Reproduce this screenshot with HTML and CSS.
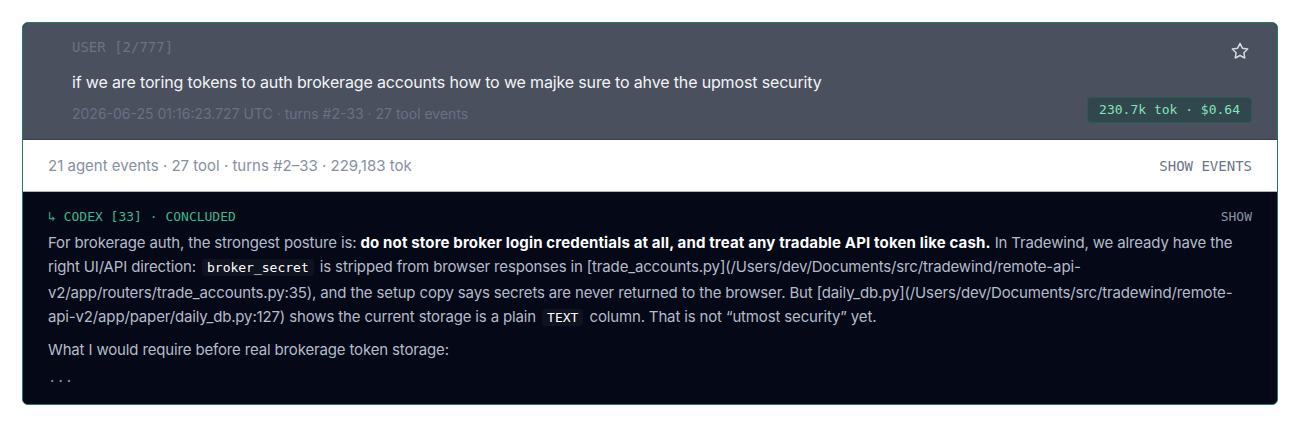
FILE: index.html
```html
<!DOCTYPE html>
<html lang="en">
<head>
<meta charset="utf-8">
<title>Turn</title>
<link rel="stylesheet" href="styles.css">
</head>
<body>
<div class="card">
  <div class="head">
    <div class="head-main">
      <div class="role">USER [2/777]</div>
      <div class="message">if we are toring tokens to auth brokerage accounts how to we majke sure to ahve the upmost security</div>
      <div class="meta">2026-06-25 01:16:23.727 UTC · turns #2-33 · 27 tool events</div>
    </div>
    <div class="head-side">
      <svg class="star" width="20" height="20" viewBox="0 0 24 24" fill="none" stroke="currentColor" stroke-width="1.8" stroke-linejoin="round"><path d="M12 2.8l2.85 5.78 6.38.93-4.62 4.5 1.09 6.35L12 17.36l-5.7 3 1.09-6.35-4.62-4.5 6.38-.93z"/></svg>
      <div class="badge">230.7k tok · $0.64</div>
    </div>
  </div>
  <div class="events">
    <span class="events-text">21 agent events · 27 tool · turns #2–33 · 229,183 tok</span>
    <span class="events-btn">SHOW EVENTS</span>
  </div>
  <div class="reply">
    <div class="reply-head">
      <span class="reply-label">↳ CODEX [33] · CONCLUDED</span>
      <span class="reply-btn">SHOW</span>
    </div>
    <p class="para">For brokerage auth, the strongest posture is: <strong>do not store broker login credentials at all, and treat any tradable API token like cash.</strong> In Tradewind, we already have the right UI/API direction: <code>broker_secret</code> is stripped from browser responses in [trade_accounts.py](/Users/dev/Documents/src/tradewind/remote-api-v2/app/routers/trade_accounts.py:35), and the setup copy says secrets are never returned to the browser. But [daily_db.py](/Users/dev/Documents/src/tradewind/remote-api-v2/app/paper/daily_db.py:127) shows the current storage is a plain <code>TEXT</code> column. That is not “utmost security” yet.</p>
    <p class="para para2">What I would require before real brokerage token storage:</p>
    <div class="more">...</div>
  </div>
</div>
</body>
</html>
```

FILE: styles.css
```css
* { box-sizing: border-box; }
html, body { margin: 0; padding: 0; background: #ffffff; }
body {
  padding: 22px;
  font-family: Inter, "Noto Sans", "Liberation Sans", sans-serif;
}
.card {
  border: 1px solid #237a5f;
  border-radius: 6px;
  overflow: hidden;
  background: #050816;
}
.head {
  display: flex;
  justify-content: space-between;
  background: #4a505e;
  padding: 14px 25px 15px 49px;
  border-bottom: 1px solid #3a3f4b;
}
.head-main { display: flex; flex-direction: column; }
.role {
  font-family: "DejaVu Sans Mono", "Liberation Mono", monospace;
  font-size: 14px;
  line-height: 20px;
  color: #6b7386;
}
.message {
  margin-top: 13px;
  font-size: 16px;
  line-height: 24px;
  color: #f3f4f7;
  letter-spacing: -0.15px;
}
.meta {
  margin-top: 10px;
  font-size: 14px;
  line-height: 20px;
  color: #697185;
}
.head-side {
  display: flex;
  flex-direction: column;
  align-items: flex-end;
  justify-content: space-between;
}
.star {
  color: #d4d7de;
  margin-top: 4px;
  margin-right: 2px;
}
.badge {
  font-family: "DejaVu Sans Mono", "Liberation Mono", monospace;
  font-size: 13px;
  line-height: 24px;
  padding: 0 11px;
  color: #86e3b8;
  background: #2f474d;
  border: 1px solid #2c5a52;
  border-radius: 4px;
  margin-bottom: 1px;
}
.events {
  display: flex;
  justify-content: space-between;
  align-items: center;
  height: 52px;
  padding: 0 25px 0 25px;
  background: #ffffff;
  border-bottom: 1px solid #aeb4bf;
}
.events-text {
  font-size: 15px;
  color: #8790a3;
}
.events-btn {
  font-family: "DejaVu Sans Mono", "Liberation Mono", monospace;
  font-size: 14px;
  color: #6c7488;
}
.reply {
  padding: 16px 25px 17px 25px;
  background: #050816;
}
.reply-head {
  display: flex;
  justify-content: space-between;
  align-items: center;
  line-height: 18px;
}
.reply-label {
  font-family: "DejaVu Sans Mono", "Liberation Mono", monospace;
  font-size: 13px;
  color: #3bb98b;
}
.reply-btn {
  font-family: "DejaVu Sans Mono", "Liberation Mono", monospace;
  font-size: 13px;
  color: #8a93a6;
}
.para {
  margin: 5px 0 0 0;
  font-size: 15px;
  line-height: 24.4px;
  color: #b3bccb;
  letter-spacing: -0.15px;
}
.para strong {
  color: #ffffff;
  font-weight: 700;
  letter-spacing: 0.15px;
}
.para code {
  font-family: "DejaVu Sans Mono", "Liberation Mono", monospace;
  font-size: 13px;
  letter-spacing: 0;
  color: #ffffff;
  background: #0f1320;
  border-radius: 3px;
  padding: 1px 5px;
  margin: 0 2px;
}
.para2 { margin-top: 7px; }
.more {
  margin-top: 5px;
  font-family: "DejaVu Sans Mono", "Liberation Mono", monospace;
  font-size: 14px;
  line-height: 20px;
  color: #8a93a6;
}
```
